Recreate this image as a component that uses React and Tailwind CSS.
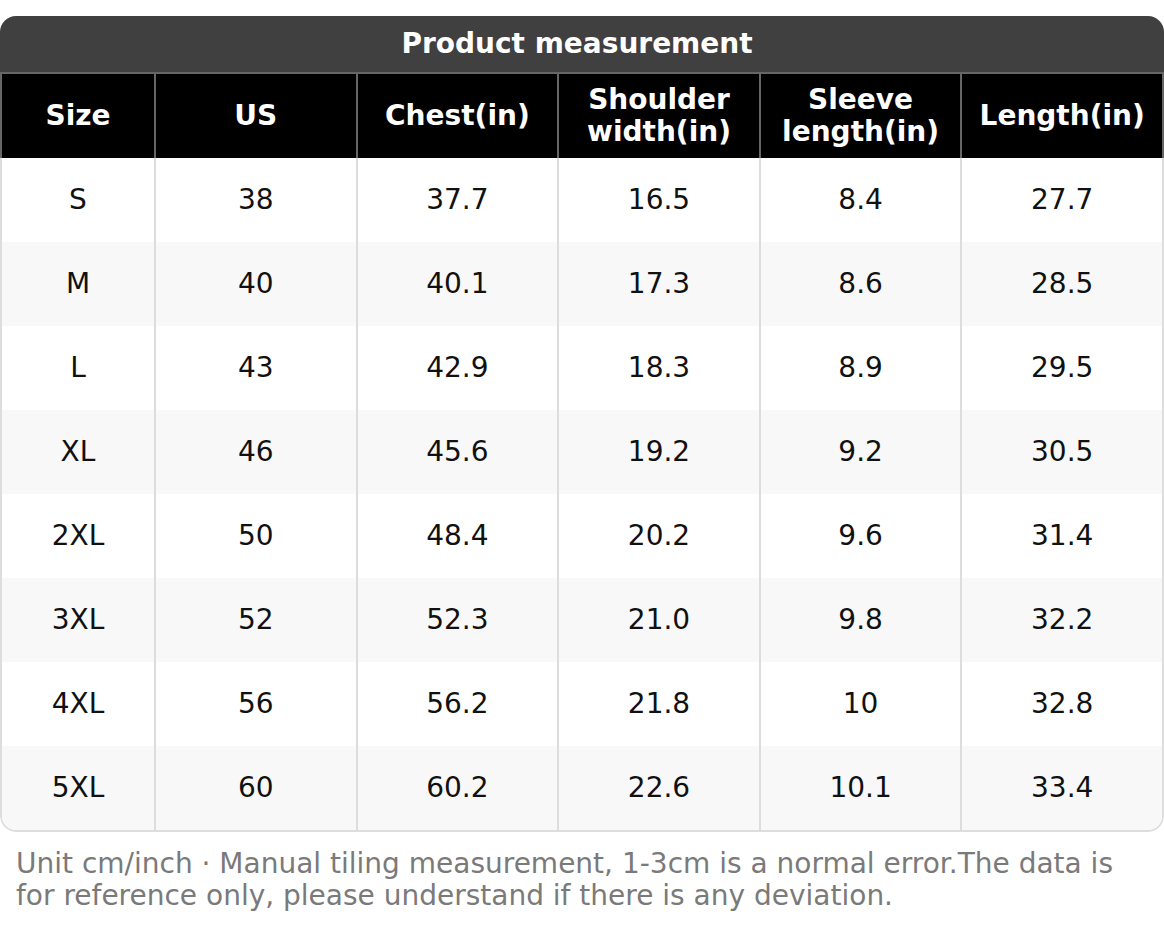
const headers = ['Size', 'US', 'Chest(in)', ['Shoulder', 'width(in)'], ['Sleeve', 'length(in)'], 'Length(in)']

const rows = [
  ['S', '38', '37.7', '16.5', '8.4', '27.7'],
  ['M', '40', '40.1', '17.3', '8.6', '28.5'],
  ['L', '43', '42.9', '18.3', '8.9', '29.5'],
  ['XL', '46', '45.6', '19.2', '9.2', '30.5'],
  ['2XL', '50', '48.4', '20.2', '9.6', '31.4'],
  ['3XL', '52', '52.3', '21.0', '9.8', '32.2'],
  ['4XL', '56', '56.2', '21.8', '10', '32.8'],
  ['5XL', '60', '60.2', '22.6', '10.1', '33.4'],
]

const font = { fontFamily: '"DejaVu Sans", "Liberation Sans", sans-serif' }

export default function App() {
  return (
    <div className="bg-white pt-4 pb-6 text-[28px]" style={font}>
      <div className="rounded-2xl overflow-hidden">
        {/* title */}
        <div className="h-[56px] bg-[#404040] flex items-center justify-center pr-[10px] text-white font-bold">
          Product measurement
        </div>

        {/* header */}
        <div className="grid grid-cols-[152px_repeat(5,1fr)] bg-black border-x-2 border-t-2 border-[#666]">
          {headers.map((h, i) => (
            <div
              key={i}
              className={`h-[84px] flex flex-col items-center justify-center text-white font-bold leading-[32px] text-center ${i > 0 ? 'border-l-2 border-[#666]' : ''}`}
            >
              {Array.isArray(h) ? h.map(l => <span key={l}>{l}</span>) : h}
            </div>
          ))}
        </div>

        {/* body */}
        <div className="border-x-2 border-b-2 border-[#ddd] rounded-b-2xl overflow-hidden">
          {rows.map((r, ri) => (
            <div
              key={r[0]}
              className={`grid grid-cols-[152px_repeat(5,1fr)] ${ri % 2 === 1 ? 'bg-[#f8f8f8]' : 'bg-white'}`}
            >
              {r.map((c, ci) => (
                <div
                  key={ci}
                  className={`h-[84px] flex items-center justify-center text-[#111] ${ci > 0 ? 'border-l-2 border-[#ddd]' : ''}`}
                >
                  {c}
                </div>
              ))}
            </div>
          ))}
        </div>
      </div>

      {/* note */}
      <p className="px-4 mt-4 text-[#7a7a7a] leading-[32px]">
        Unit cm/inch · Manual tiling measurement, 1-3cm is a normal error.The data is for reference only, please understand if there is any deviation.
      </p>
    </div>
  )
}
